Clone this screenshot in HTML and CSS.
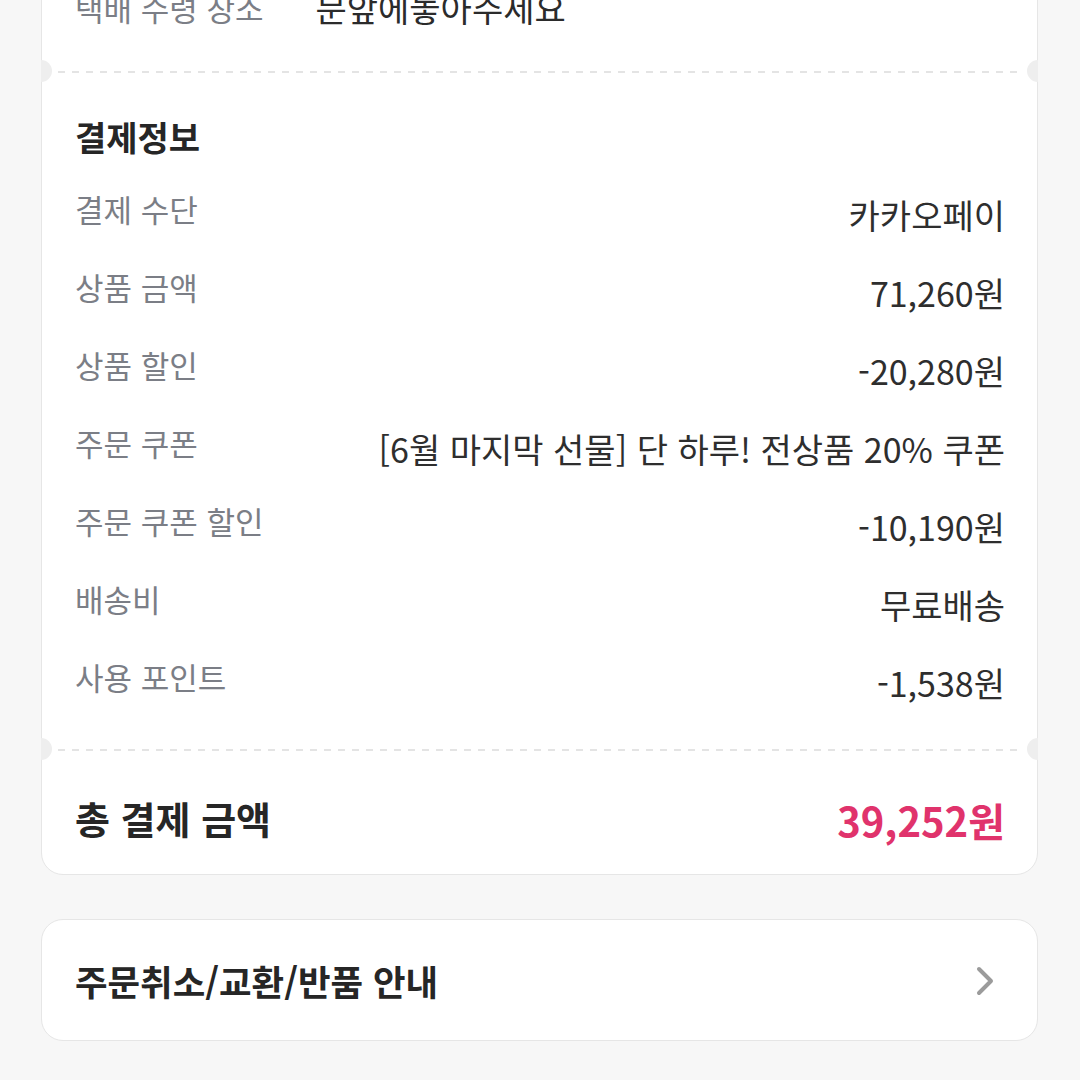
FILE: index.html
```html
<!DOCTYPE html>
<html lang="ko">
<head>
<meta charset="utf-8">
<link rel="stylesheet" href="styles.css">
</head>
<body>
<div class="page">
  <div class="card card-main">
    <div class="sec sec-top">
      <div class="row-top">
        <span class="label">택배 수령 장소</span>
        <span class="addr">문앞에놓아주세요</span>
      </div>
    </div>
    <div class="divider"></div>
    <div class="sec sec-pay">
      <div class="title">결제정보</div>
      <div class="rows">
        <div class="row"><span class="label">결제 수단</span><span class="value">카카오페이</span></div>
        <div class="row"><span class="label">상품 금액</span><span class="value">71,260원</span></div>
        <div class="row"><span class="label">상품 할인</span><span class="value">-20,280원</span></div>
        <div class="row"><span class="label">주문 쿠폰</span><span class="value">[6월 마지막 선물] 단 하루! 전상품 20% 쿠폰</span></div>
        <div class="row"><span class="label">주문 쿠폰 할인</span><span class="value">-10,190원</span></div>
        <div class="row"><span class="label">배송비</span><span class="value">무료배송</span></div>
        <div class="row"><span class="label">사용 포인트</span><span class="value">-1,538원</span></div>
      </div>
    </div>
    <div class="divider"></div>
    <div class="sec sec-total">
      <span class="total-label">총 결제 금액</span>
      <span class="total-value">39,252원</span>
    </div>
  </div>

  <div class="card card-link">
    <span class="link-text">주문취소/교환/반품 안내</span>
    <svg class="chev" width="20" height="32" viewBox="0 0 20 32" aria-hidden="true">
      <polyline points="4,4 16,16 4,28" fill="none" stroke="#9b9b9b" stroke-width="4" stroke-linecap="round" stroke-linejoin="round"/>
    </svg>
  </div>
</div>
</body>
</html>
```

FILE: styles.css
```css
* { box-sizing: border-box; }
html, body {
  margin: 0;
  padding: 0;
  background: #f7f7f7;
  font-family: "Noto Sans CJK KR", "Noto Sans", sans-serif;
  overflow: hidden;
}
.page {
  width: 1080px;
  height: 1080px;
  padding: 0 42px 0 41px;
  display: flex;
  flex-direction: column;
  gap: 44px;
}
.card {
  background: #ffffff;
  border: 1px solid #e6e6e6;
  border-radius: 22px;
}
.card-main {
  margin-top: -60px;
  display: flex;
  flex-direction: column;
}
.sec {
  padding: 0 32px 0 33px;
}
.sec-top {
  padding-top: 47px;
  padding-bottom: 43px;
}
.row-top {
  display: flex;
  align-items: flex-start;
  gap: 52px;
}
.label {
  font-size: 31px;
  line-height: 40px;
  color: #7b7e86;
}
.addr {
  font-size: 34px;
  line-height: 40px;
  color: #2b2b2b;
}
.divider {
  position: relative;
  height: 2px;
  margin: 0 16px;
  background: repeating-linear-gradient(90deg, #e4e4e4 0 7px, transparent 7px 14px);
}
.divider::before,
.divider::after {
  content: "";
  position: absolute;
  top: -11px;
  width: 11px;
  height: 22px;
  background: #eeeeee;
}
.divider::before {
  left: -17px;
  border-radius: 0 11px 11px 0;
}
.divider::after {
  right: -17px;
  border-radius: 11px 0 0 11px;
}
.sec-pay {
  padding-top: 42px;
  padding-bottom: 46px;
}
.title {
  font-size: 34px;
  line-height: 44px;
  font-weight: 700;
  color: #262626;
}
.rows {
  margin-top: 30px;
  display: flex;
  flex-direction: column;
  gap: 32px;
}
.row {
  display: flex;
  justify-content: space-between;
  align-items: flex-start;
}
.value {
  margin-top: 6px;
  font-size: 34px;
  line-height: 40px;
  color: #2e2e2e;
}
.sec-total {
  display: flex;
  justify-content: space-between;
  align-items: center;
  padding-top: 42px;
  padding-bottom: 31px;
  height: 123px;
}
.total-label {
  font-size: 38px;
  line-height: 50px;
  font-weight: 700;
  color: #262626;
}
.total-value {
  font-size: 40px;
  line-height: 50px;
  font-weight: 700;
  color: #e0336c;
  margin-top: 4px;
}
.card-link {
  height: 122px;
  display: flex;
  align-items: center;
  justify-content: space-between;
  padding: 0 42px 0 33px;
}
.link-text {
  font-size: 35.4px;
  font-weight: 700;
  color: #262626;
}
.chev { display: block; margin-top: 2px; }
```
